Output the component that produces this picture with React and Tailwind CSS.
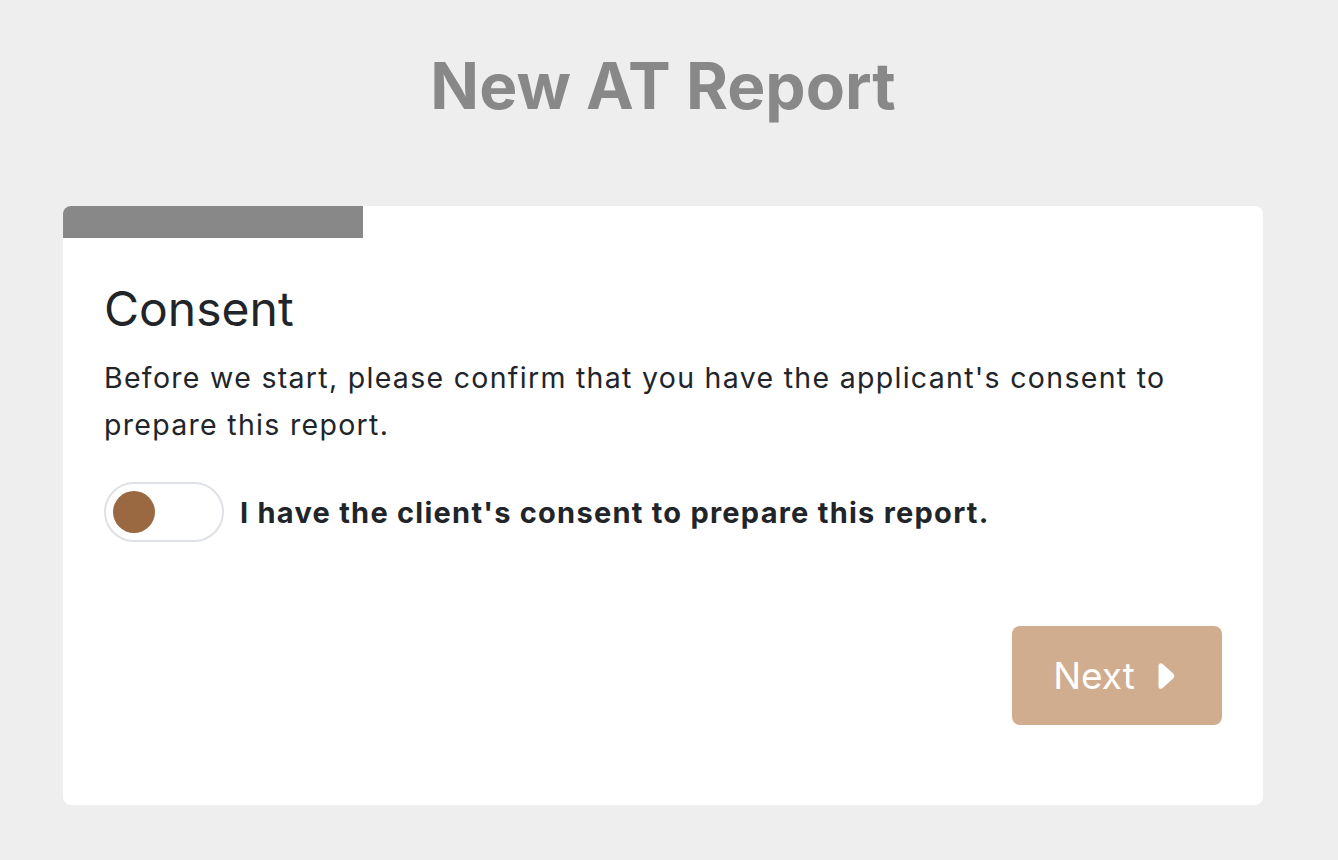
export default function App() {
  return (
    <div className="min-h-[860px] bg-[#eeeeee] font-['Inter',sans-serif] text-[#212529]">
      <div className="ml-[63px] w-[1200px] pt-[48px]">
        <h1 className="text-center text-[64px] font-bold leading-[1.2] text-[#888888]">New AT Report</h1>

        <div className="mt-[81px] overflow-hidden rounded-[8px] bg-white">
          {/* progress */}
          <div className="h-[32px] w-[300px] bg-[#888888]" />

          <div className="px-[41px] pb-[80px] pt-[42px]">
            <h2 className="text-[48px] leading-[1.2]">Consent</h2>
            <p className="mt-[17px] text-[28.5px] leading-[47px] tracking-[1.3px]">
              Before we start, please confirm that you have the applicant's consent to prepare this report.
            </p>

            <div className="mt-[34px] flex items-center gap-[16px]">
              <div className="flex h-[60px] w-[120px] items-center rounded-full border-2 border-[#dee2e6] px-[7px]">
                <div className="h-[42px] w-[42px] rounded-full bg-[#9a6942]" />
              </div>
              <span className="text-[29px] font-bold tracking-[1.25px]">I have the client's consent to prepare this report.</span>
            </div>

            <div className="mt-[84px] flex justify-end">
              <button className="flex h-[99px] w-[210px] items-center justify-center gap-[22px] rounded-[8px] bg-[#d1ad8f] pr-[6px] text-[37px] text-white">
                Next
                <svg width="18" height="28" viewBox="0 0 18 28" fill="white">
                  <path d="M1.5 3.5 C1.5 1.3 3.8 0.4 5.4 1.8 L16.3 11.8 C17.6 13 17.6 15 16.3 16.2 L5.4 26.2 C3.8 27.6 1.5 26.7 1.5 24.5 Z" />
                </svg>
              </button>
            </div>
          </div>
        </div>
      </div>
    </div>
  );
}
